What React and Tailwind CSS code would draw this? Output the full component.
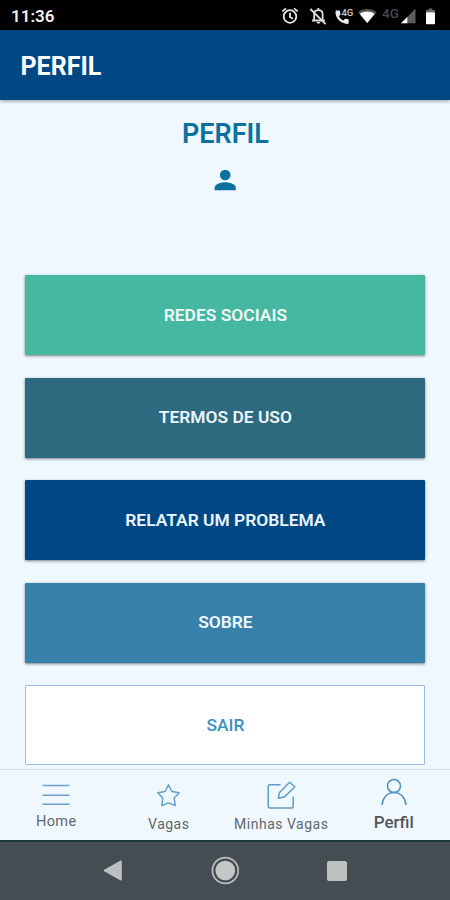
import clsx from "clsx";

const buttons = [
  { label: "REDES SOCIAIS", className: "bg-[#46b7a0] font-semibold text-[#effaf8] shadow-[0_1px_3px_rgba(0,0,0,0.5)]" },
  { label: "TERMOS DE USO", className: "bg-[#2d697f] font-semibold text-[#edf6fb] shadow-[0_1px_3px_rgba(0,0,0,0.5)]" },
  { label: "RELATAR UM PROBLEMA", className: "bg-[#004884] font-semibold text-[#edf5ff] shadow-[0_1px_3px_rgba(0,0,0,0.5)]" },
  { label: "SOBRE", className: "bg-[#3780aa] font-semibold text-[#edf7ff] shadow-[0_1px_3px_rgba(0,0,0,0.5)]" },
  { label: "SAIR", className: "border border-[#9db8ee] bg-white font-medium text-[#3b90c6]" },
];

const StatusBar = () => {
  return (
    <div className="flex h-[30px] shrink-0 items-center justify-between bg-black pr-[12px] pl-[11px] text-white">
      <span className="pt-[3px] text-[17px] leading-none font-semibold text-[#eeeeee]">11:36</span>

      <svg width="158" height="30" viewBox="280 0 158 30" fill="none">
        {/* alarm */}
        <g stroke="#e8e8e8" strokeWidth="1.8">
          <circle cx="290" cy="16.5" r="6.3" />
          <path d="M290 12.7V17L293 18.8M282.3 11.4L286 8.4M297.7 11.4L294 8.4" />
        </g>

        {/* muted bell */}
        <g stroke="#dddddd" strokeWidth="1.8">
          <path d="M314.2 20.2V14.2C314.2 8.8 322.6 8.8 322.6 14.2V20.2M312 20.5H324.8M318.4 8V10" />
          <path d="M310.4 9L325.6 24.2" />
        </g>
        <path d="M316.6 22H320.2A1.8 1.8 0 0 1 316.6 22Z" fill="#dddddd" />

        {/* call */}
        <path
          transform="translate(333.8 9.6) scale(0.84)"
          d="M3.5 1.2C2.7 1.2 2 1.8 2 2.7C2 10.6 8.4 17 16.3 17C17.1 17 17.7 16.4 17.7 15.6V12.6C17.7 11.8 17.1 11.4 16.3 11.3L13.5 10.8L11.2 13C8.9 11.8 7.1 10 6 7.8L8 5.7L7.5 2.6C7.4 1.7 6.9 1.2 6.2 1.2Z"
          fill="#eeeeee"
        />
        <text x="341.4" y="15.8" fontSize="9.5" fontWeight="500" fill="#cccccc">4G</text>

        {/* wifi */}
        <path d="M358 12.2C363.2 8 371.2 8 376.5 12.2L367.2 23.3Z" fill="#555555" />
        <path d="M359.8 14C364.2 10.8 370.2 10.8 374.6 14L367.2 23Z" fill="#ffffff" />

        {/* mobile signal */}
        <text x="382" y="18" fontSize="13.5" fontWeight="500" fill="#484848">4G</text>
        <path d="M401 23.3L415.5 8.8V23.3Z" fill="#5c5c5c" />
        <path d="M401 23.3L407.3 17V23.3Z" fill="#ffffff" />

        {/* battery */}
        <path d="M426 11.2V10H428.6V8.5H432.4V10H435V12.5H426Z" fill="#666666" />
        <rect x="426" y="12.3" width="9" height="12" rx="1" fill="#ffffff" />
      </svg>
    </div>
  );
};

const MenuIcon = () => (
  <svg width="28" height="24" viewBox="0 0 28 24" fill="none" stroke="#6f9fc8" strokeWidth="1.5">
    <path d="M.5 1.5H27.5M.5 11.3H27.5M.5 20.3H27.5" />
  </svg>
);

const StarIcon = () => (
  <svg width="24" height="24" viewBox="0 0 24 24" fill="none" stroke="#5f9cca" strokeWidth="1.4" strokeLinejoin="round">
    <path d="M11.5 .8L14.9 7.5L22.2 8.7L17.2 13.9L18.2 21.6L11.5 18.9L4.8 21.6L5.8 13.9L.8 8.7L8.1 7.5Z" />
  </svg>
);

const EditIcon = () => (
  <svg width="30" height="30" viewBox="0 0 30 30" fill="none" stroke="#5f9cc6" strokeWidth="1.5" strokeLinejoin="round">
    <path d="M14.5 4.7H3.7Q2.2 4.7 2.2 6.2V26.5Q2.2 28 3.7 28H25.7Q27.2 28 27.2 26.5V16.5" />
    <path d="M12.4 18.3L13.5 12.5L23.7 2.2L28.9 6.8L18.2 17.1Z" />
  </svg>
);

const UserIcon = () => (
  <svg width="28" height="28" viewBox="0 0 28 28" fill="none" stroke="#4d91c4" strokeWidth="1.5">
    <circle cx="14" cy="8" r="6.5" />
    <path d="M2 27C2.7 19.8 7.2 14.5 14 14.5C20.8 14.5 25.3 19.8 26 27" />
  </svg>
);

const tabs = [
  { label: "Home", Icon: MenuIcon, className: "pt-[14px] text-[14.5px]", labelClass: "mt-[5px] tracking-[0.4px]" },
  { label: "Vagas", Icon: StarIcon, className: "pt-[14px] text-[14px]", labelClass: "mt-[7px] tracking-[0.5px]" },
  { label: "Minhas Vagas", Icon: EditIcon, className: "pt-[10px] text-[14px]", labelClass: "mt-[5px] tracking-[0.5px]" },
  { label: "Perfil", Icon: UserIcon, className: "pt-[8px] text-[17px]", labelClass: "mt-[7px] font-medium text-[#50565b]" },
];

const TabBar = () => {
  return (
    <nav className="grid h-[71px] shrink-0 grid-cols-4 border-t border-[#d5dde5] bg-[#f0f8ff]">
      {tabs.map(({ label, Icon, className, labelClass }) => (
        <a key={label} className={clsx("flex flex-col items-center text-[#62676c]", className)}>
          <Icon />
          <span className={clsx("leading-[18px] whitespace-nowrap", labelClass)}>{label}</span>
        </a>
      ))}
    </nav>
  );
};

const SystemNav = () => {
  return (
    <div className="grid h-[60px] shrink-0 grid-cols-[1fr_30px_1fr] items-center border-t-2 border-[#1d3838] bg-[#454d53]">
      <svg className="mr-[87px] justify-self-end" width="20" height="22" viewBox="0 0 20 22" fill="#bcc0c0">
        <path d="M1.2 9.7Q0 10.5 1.2 11.3L17.5 20.5Q18.8 20.9 18.8 19.5V1.5Q18.8 .1 17.5 .5Z" />
      </svg>
      <svg width="30" height="30" viewBox="0 0 30 30">
        <circle cx="15.3" cy="14.5" r="12.9" fill="none" stroke="#b9bebe" strokeWidth="1.7" />
        <circle cx="15.3" cy="14.5" r="9.8" fill="#c4c7c6" />
      </svg>
      <div className="mb-[1px] ml-[87px] size-[20px] rounded-[2px] bg-[#bdc1c0]" />
    </div>
  );
};

const App = () => {
  return (
    <div className="flex h-[900px] w-[450px] flex-col overflow-hidden bg-[#f0f8ff] font-['Roboto',sans-serif]">
      <StatusBar />

      <header className="z-10 flex h-[70px] shrink-0 items-center bg-[#004884] pt-[2px] pl-[20.5px] shadow-[0_1px_4px_rgba(0,0,0,0.4)]">
        <h1 className="text-[25px] leading-none font-bold text-white">PERFIL</h1>
      </header>

      <main className="flex min-h-0 flex-1 flex-col pr-[24.6px] pl-[25.4px]">
        <div className="flex h-[175.4px] shrink-0 flex-col items-center pt-[18px] text-[#0c719f]">
          <h2 className="text-[27px] leading-[32px] font-semibold">PERFIL</h2>
          <svg className="mt-[19px]" width="22" height="22" viewBox="0 0 22 22" fill="currentColor">
            <circle cx="11.2" cy="6" r="5.3" />
            <path d="M.6 21.3V18.7C.6 15.3 6.4 13.2 11.2 13.2C16 13.2 21.8 15.3 21.8 18.7V21.3Z" />
          </svg>
        </div>

        <div className="flex flex-col gap-[22.5px]">
          {buttons.map(({ label, className }) => (
            <button
              key={label}
              className={clsx("h-[80px] w-full rounded-[1px] pb-[1px] text-[17.4px]", className)}
            >
              {label}
            </button>
          ))}
        </div>
      </main>

      <TabBar />
      <SystemNav />
    </div>
  );
};

export default App;
